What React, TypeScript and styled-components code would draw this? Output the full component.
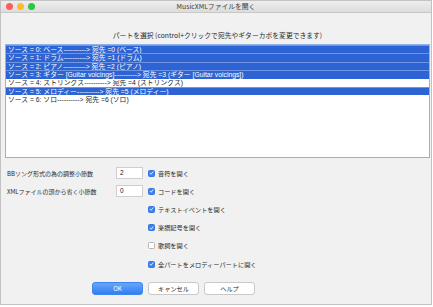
import styled, { createGlobalStyle } from "styled-components";

const GlobalStyle = createGlobalStyle`
  html, body {
    margin: 0;
    padding: 0;
    background: #ffffff;
  }
  body {
    font-family: "Noto Sans CJK JP", "Liberation Sans", sans-serif;
  }
`;

const Window = styled.div`
  width: 432px;
  height: 305px;
  box-sizing: border-box;
  border: 1px solid #c2c2c2;
  background: #f1f1f1;
  display: flex;
  flex-direction: column;
  overflow: hidden;
`;

const TitleBar = styled.div`
  height: 12px;
  flex: none;
  box-sizing: border-box;
  display: grid;
  grid-template-columns: 1fr auto 1fr;
  align-items: center;
  padding: 0 5px;
  background: linear-gradient(#eeeeee, #dcdcdc);
  border-bottom: 1px solid #c8c8c8;
`;

const Lights = styled.div`
  display: flex;
  gap: 4px;
`;

const Light = styled.span<{ $c: string }>`
  width: 7px;
  height: 7px;
  border-radius: 50%;
  background: ${(p) => p.$c};
`;

const Title = styled.div`
  font-size: 6.8px;
  color: #404040;
  line-height: 1;
`;

const Content = styled.div`
  flex: 1;
  display: flex;
  flex-direction: column;
  padding: 0 1px 0 4px;
`;

const Heading = styled.div`
  margin-top: 18px;
  height: 13px;
  text-align: center;
  font-size: 6.8px;
  line-height: 8px;
  color: #2a2a2a;
`;

const List = styled.div`
  height: 114px;
  box-sizing: border-box;
  background: #ffffff;
  border: 1.5px solid #8db2ee;
  display: flex;
  flex-direction: column;
  overflow: hidden;
`;

const Row = styled.div<{ $sel: boolean }>`
  height: 8.4px;
  flex: none;
  box-sizing: border-box;
  overflow: hidden;
  padding-left: 2px;
  display: flex;
  align-items: center;
  font-family: "Liberation Sans", "Noto Sans CJK JP", sans-serif;
  font-size: 6.8px;
  line-height: 7.8px;
  white-space: nowrap;
  color: ${(p) => (p.$sel ? "#ffffff" : "#1e1e1e")};
  background: ${(p) => (p.$sel ? "#2d63d2" : "#ffffff")};
  border-top: 0.5px solid ${(p) => (p.$sel ? "#6f95e2" : "#ffffff")};
`;

const Options = styled.div`
  margin-top: 6px;
  display: grid;
  grid-template-columns: 106px 27px 150px;
  column-gap: 5px;
  grid-auto-rows: 18.2px;
  align-items: center;
`;

const Label = styled.div`
  padding-left: 2px;
  font-size: 6px;
  color: #2a2a2a;
  white-space: nowrap;
`;

const NumBox = styled.div`
  height: 12px;
  box-sizing: border-box;
  background: #ffffff;
  border: 1px solid #cfcfcf;
  font-family: "Liberation Sans", sans-serif;
  font-size: 6.5px;
  line-height: 10px;
  padding-left: 3px;
  color: #222;
`;

const Check = styled.label`
  grid-column: 3;
  display: flex;
  align-items: center;
  gap: 3px;
  font-size: 6.2px;
  color: #2a2a2a;
  white-space: nowrap;
`;

const Box = styled.span<{ $on: boolean }>`
  width: 7px;
  height: 7px;
  box-sizing: border-box;
  border-radius: 1.5px;
  display: flex;
  align-items: center;
  justify-content: center;
  background: ${(p) => (p.$on ? "#3f82ea" : "#ffffff")};
  border: 0.5px solid ${(p) => (p.$on ? "#3477e0" : "#b5b5b5")};
`;

const Buttons = styled.div`
  margin-top: 9px;
  padding-left: 87px;
  display: flex;
  gap: 5px;
`;

const Button = styled.div<{ $primary?: boolean }>`
  width: 51px;
  height: 13px;
  box-sizing: border-box;
  border-radius: 3px;
  display: flex;
  align-items: center;
  justify-content: center;
  font-size: 6.2px;
  color: ${(p) => (p.$primary ? "#ffffff" : "#2a2a2a")};
  background: ${(p) =>
    p.$primary ? "linear-gradient(#69a6fa, #2f7ef2)" : "#ffffff"};
  border: 0.5px solid ${(p) => (p.$primary ? "#3d86f0" : "#c9c9c9")};
`;

const rows = [
  { t: "ソース = 0: ベース----------> 宛先 =0 (ベース)", s: true },
  { t: "ソース = 1: ドラム----------> 宛先 =1 (ドラム)", s: true },
  { t: "ソース = 2: ピアノ----------> 宛先 =2 (ピアノ)", s: true },
  {
    t: "ソース = 3: ギター [Guitar voicings]----------> 宛先 =3 (ギター [Guitar voicings])",
    s: true,
  },
  { t: "ソース = 4: ストリングス----------> 宛先 =4 (ストリングス)", s: false },
  { t: "ソース = 5: メロディー----------> 宛先 =5 (メロディー)", s: true },
  { t: "ソース = 6: ソロ----------> 宛先 =6 (ソロ)", s: false },
];

const checks = [
  { t: "音符を開く", on: true },
  { t: "コードを開く", on: true },
  { t: "テキストイベントを開く", on: true },
  { t: "楽譜記号を開く", on: true },
  { t: "歌詞を開く", on: false },
  { t: "全パートをメロディーパートに開く", on: true },
];

function Tick() {
  return (
    <svg width="6" height="6" viewBox="0 0 10 10">
      <path
        d="M2 5.3 L4.2 7.5 L8 2.6"
        fill="none"
        stroke="#fff"
        strokeWidth="1.6"
        strokeLinecap="round"
        strokeLinejoin="round"
      />
    </svg>
  );
}

export default function App() {
  return (
    <>
      <GlobalStyle />
      <Window>
        <TitleBar>
          <Lights>
            <Light $c="#fc5f57" />
            <Light $c="#fdbc2e" />
            <Light $c="#29c840" />
          </Lights>
          <Title>MusicXMLファイルを開く</Title>
          <div />
        </TitleBar>
        <Content>
          <Heading>パートを選択 (control+クリックで宛先やギターカポを変更できます)</Heading>
          <List>
            {rows.map((r, i) => (
              <Row key={i} $sel={r.s}>
                <span>{r.t}</span>
              </Row>
            ))}
          </List>
          <Options>
            <Label>BBソング形式の為の調整小節数</Label>
            <NumBox>2</NumBox>
            <Check>
              <Box $on={checks[0].on}>{checks[0].on && <Tick />}</Box>
              {checks[0].t}
            </Check>
            <Label>XMLファイルの頭から省く小節数</Label>
            <NumBox>0</NumBox>
            <Check>
              <Box $on={checks[1].on}>{checks[1].on && <Tick />}</Box>
              {checks[1].t}
            </Check>
            {checks.slice(2).map((c, i) => (
              <Check key={i}>
                <Box $on={c.on}>{c.on && <Tick />}</Box>
                {c.t}
              </Check>
            ))}
          </Options>
          <Buttons>
            <Button $primary>OK</Button>
            <Button>キャンセル</Button>
            <Button>ヘルプ</Button>
          </Buttons>
        </Content>
      </Window>
    </>
  );
}
